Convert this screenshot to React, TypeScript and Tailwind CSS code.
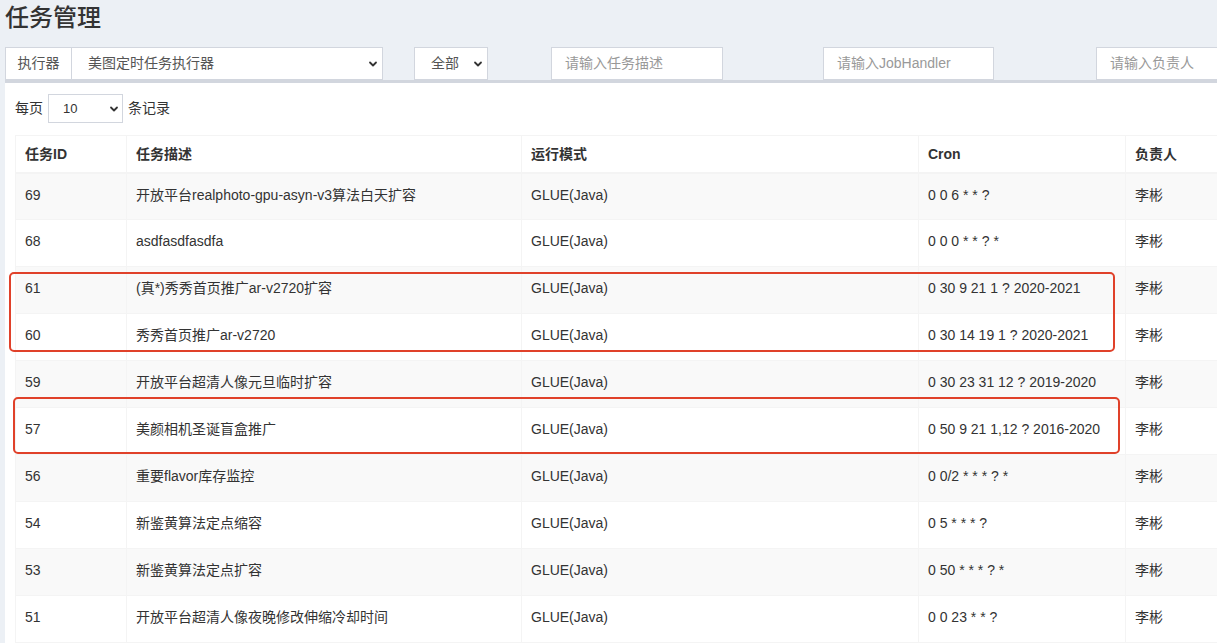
import React from "react";

const font = {
  fontFamily:
    '"Helvetica Neue", Helvetica, Arial, "Liberation Sans", "Noto Sans CJK SC", sans-serif',
};

const Chevron = () => (
  <svg width="10" height="10" viewBox="0 0 10 10" className="shrink-0">
    <path d="M2 3.5 L5 6.5 L8 3.5" fill="none" stroke="#333" strokeWidth="1.8" strokeLinecap="round" strokeLinejoin="round" />
  </svg>
);

const rows = [
  ["69", "开放平台realphoto-gpu-asyn-v3算法白天扩容", "0 0 6 * * ?"],
  ["68", "asdfasdfasdfa", "0 0 0 * * ? *"],
  ["61", "(真*)秀秀首页推广ar-v2720扩容", "0 30 9 21 1 ? 2020-2021"],
  ["60", "秀秀首页推广ar-v2720", "0 30 14 19 1 ? 2020-2021"],
  ["59", "开放平台超清人像元旦临时扩容", "0 30 23 31 12 ? 2019-2020"],
  ["57", "美颜相机圣诞盲盒推广", "0 50 9 21 1,12 ? 2016-2020"],
  ["56", "重要flavor库存监控", "0 0/2 * * * ? *"],
  ["54", "新鉴黄算法定点缩容", "0 5 * * * ?"],
  ["53", "新鉴黄算法定点扩容", "0 50 * * * ? *"],
  ["51", "开放平台超清人像夜晚修改伸缩冷却时间", "0 0 23 * * ?"],
];

export default function App() {
  return (
    <div className="relative w-[1217px] h-[643px] overflow-hidden bg-[#ecf0f5] text-[#333]" style={font}>
      <div className="h-[47px] pl-[5px] pt-[3px] text-[24px] leading-[30px] font-medium text-[#333]">任务管理</div>

      <div className="flex h-[33px] ml-[5px] text-[14px] w-[1400px]">
        <div className="w-[67px] border border-[#d2d6de] bg-white flex items-center justify-center text-[#555]">执行器</div>
        <div className="w-[311px] border-y border-r border-[#d2d6de] bg-white flex items-center justify-between pl-[16px] pr-[4px] text-[#555]">
          <span>美图定时任务执行器</span>
          <Chevron />
        </div>
        <div className="w-[31px]" />
        <div className="w-[74px] border border-[#d2d6de] bg-white flex items-center justify-between pl-[16px] pr-[4px] text-[#555]">
          <span>全部</span>
          <Chevron />
        </div>
        <div className="w-[63px]" />
        <div className="w-[172px] border border-[#d2d6de] bg-white flex items-center pl-[13px] text-[#999]">请输入任务描述</div>
        <div className="w-[100px]" />
        <div className="w-[171px] border border-[#d2d6de] bg-white flex items-center pl-[13px] text-[#999]">请输入JobHandler</div>
        <div className="w-[102px]" />
        <div className="w-[171px] border border-[#d2d6de] bg-white flex items-center pl-[13px] text-[#999]">请输入负责人</div>
      </div>

      <div className="ml-[5px] w-[1400px] border-t-[3px] border-[#d2d6de] bg-white pl-[10px] pt-[11px] h-[700px]">
        <div className="flex items-center h-[29px] text-[14px]">
          <span>每页</span>
          <div className="ml-[5px] w-[75px] h-[29px] border border-[#d2d6de] flex items-center justify-between pl-[14px] pr-[3px] text-[13px]">
            <span>10</span>
            <Chevron />
          </div>
          <span className="ml-[5px]">条记录</span>
        </div>

        <table className="mt-[12px] border-collapse text-[14px] w-[1300px] table-fixed">
          <colgroup>
            <col className="w-[111px]" />
            <col className="w-[395px]" />
            <col className="w-[397px]" />
            <col className="w-[207px]" />
            <col />
          </colgroup>
          <thead>
            <tr className="h-[37px]">
              {["任务ID", "任务描述", "运行模式", "Cron", "负责人"].map((h) => (
                <th key={h} className="border border-[#f4f4f4] border-b-2 text-left font-bold pl-[9px] leading-[20px] align-middle">
                  {h}
                </th>
              ))}
            </tr>
          </thead>
          <tbody>
            {rows.map((r, i) => (
              <tr key={r[0]} className={i % 2 === 0 ? "h-[47px] bg-[#f9f9f9]" : "h-[47px] bg-white"}>
                <td className="border border-[#f4f4f4] align-top pt-[11px] pl-[9px] leading-[20px]">{r[0]}</td>
                <td className="border border-[#f4f4f4] align-top pt-[11px] pl-[9px] leading-[20px]">{r[1]}</td>
                <td className="border border-[#f4f4f4] align-top pt-[11px] pl-[9px] leading-[20px]">GLUE(Java)</td>
                <td className="border border-[#f4f4f4] align-top pt-[11px] pl-[9px] leading-[20px]">{r[2]}</td>
                <td className="border border-[#f4f4f4] align-top pt-[11px] pl-[9px] leading-[20px]">李彬</td>
              </tr>
            ))}
          </tbody>
        </table>
      </div>

      <div className="absolute left-[9px] top-[272px] w-[1106px] h-[80px] border-[2.5px] border-[#e0412a] rounded-[5px]" />
      <div className="absolute left-[13px] top-[397px] w-[1107px] h-[57px] border-[2.5px] border-[#e0412a] rounded-[5px]" />
    </div>
  );
}
